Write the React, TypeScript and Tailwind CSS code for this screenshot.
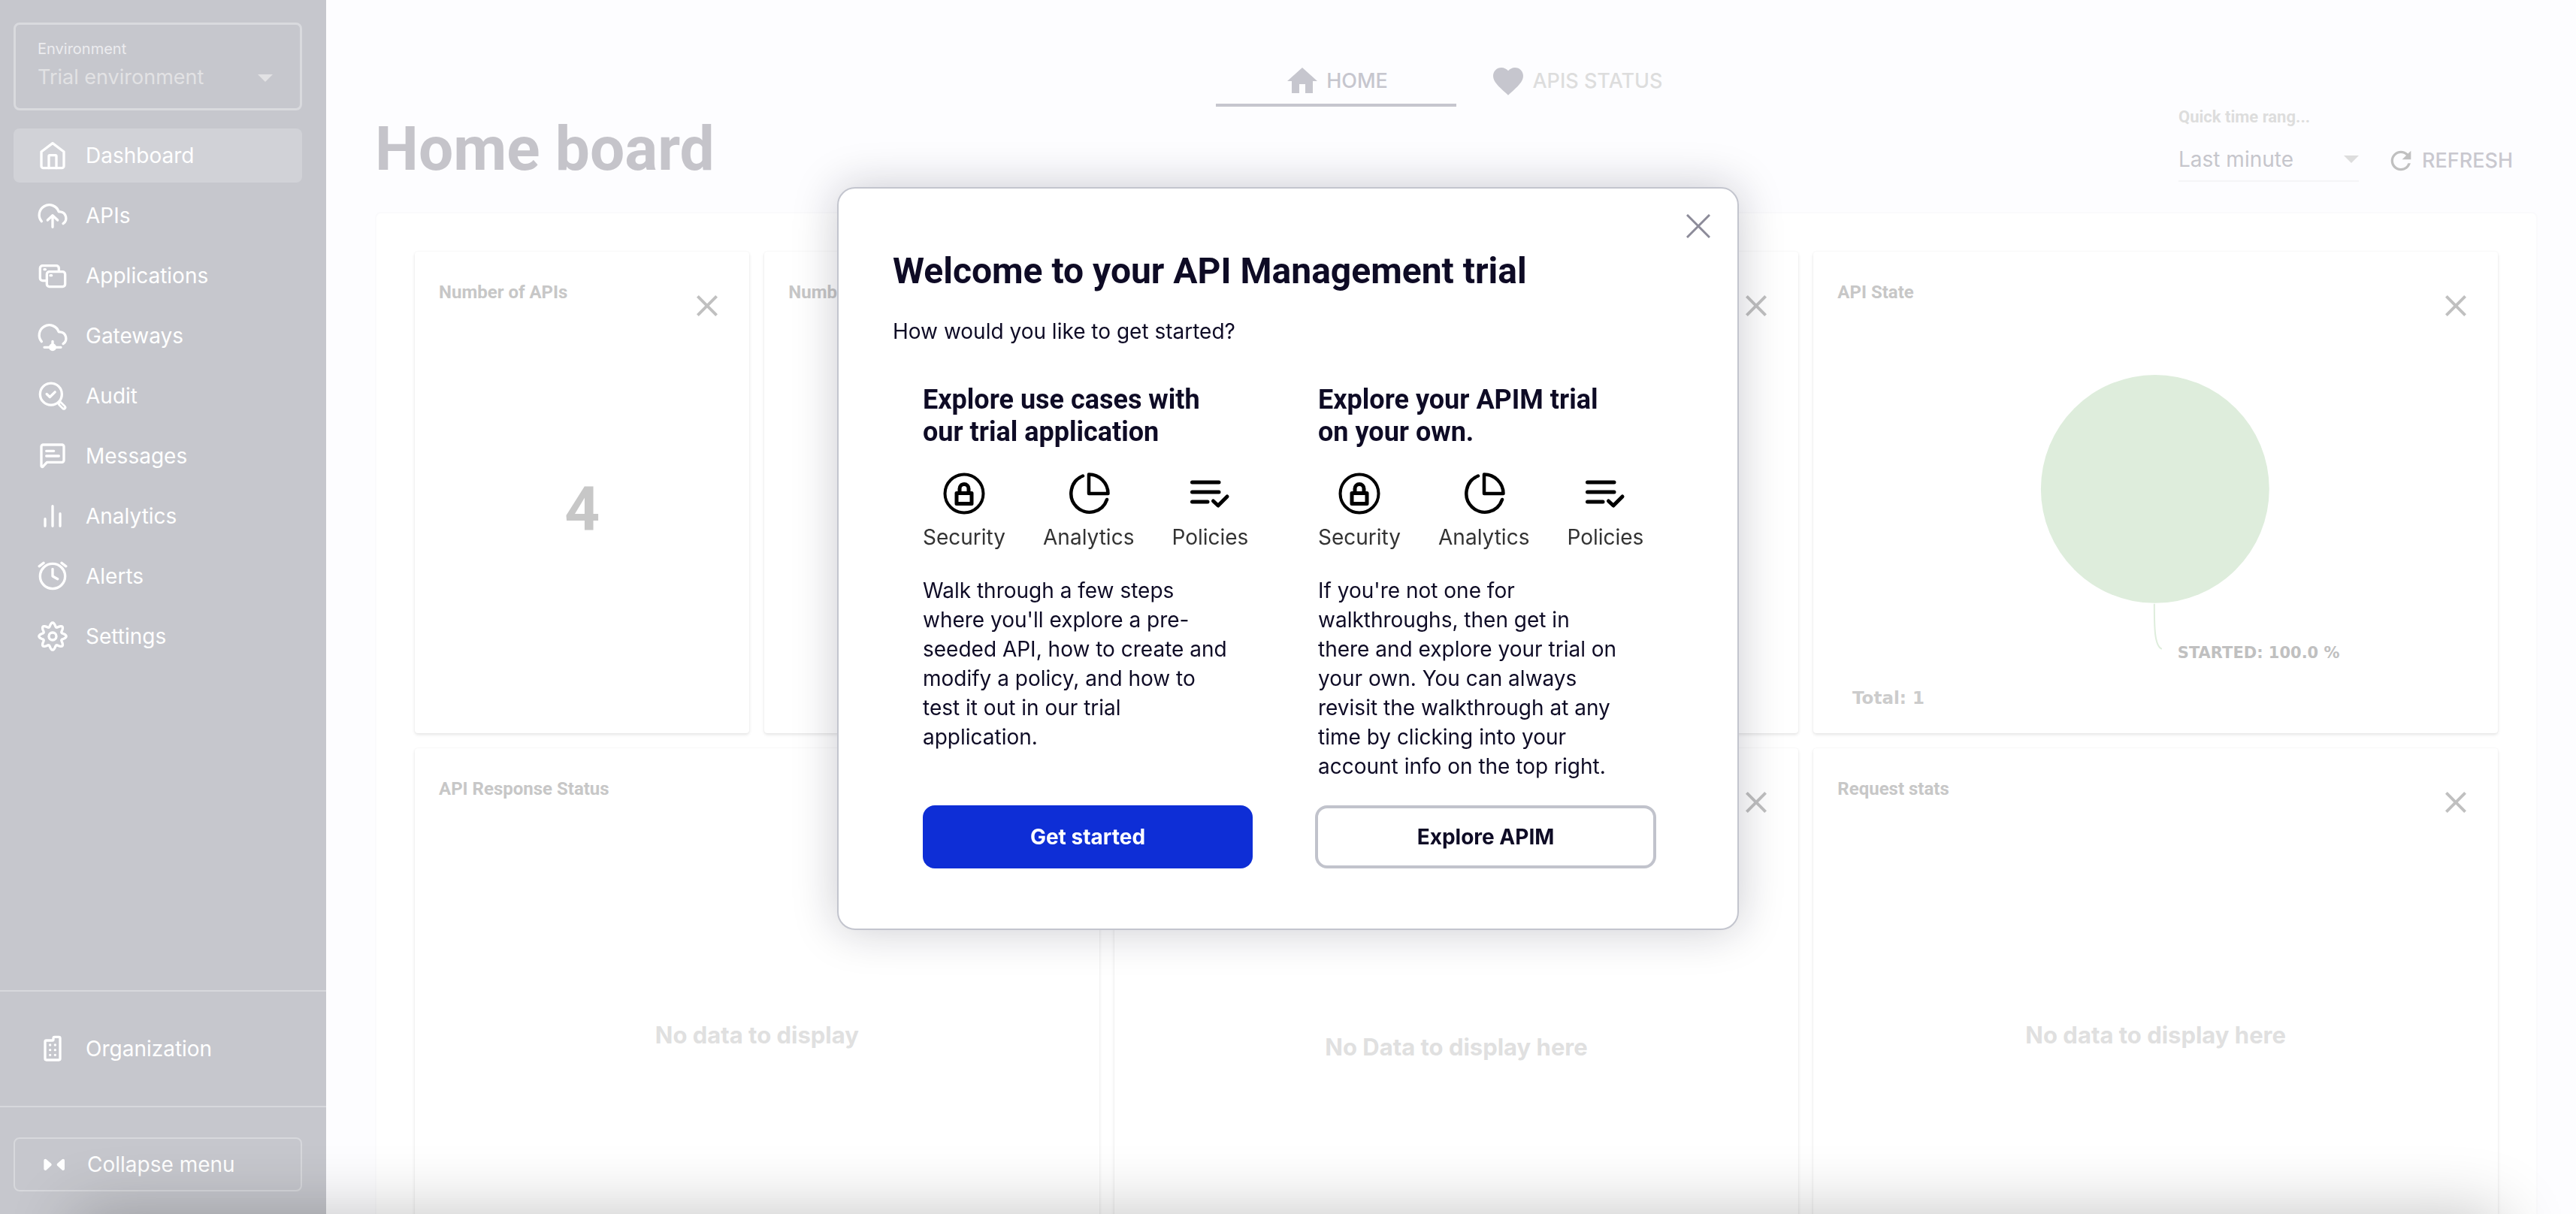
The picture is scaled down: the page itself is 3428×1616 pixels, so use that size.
import type { ReactNode } from "react";
import { MdClose, MdFavorite, MdHome, MdRefresh } from "react-icons/md";

const gearPath =
  Array.from({ length: 160 }, (_, i) => {
    const a = (i / 160) * Math.PI * 2;
    const r = 9.3 + 1.6 * Math.cos(8 * a);
    return `${i === 0 ? "M" : "L"}${(12 + r * Math.sin(a)).toFixed(2)} ${(12 - r * Math.cos(a)).toFixed(2)}`;
  }).join("") + "Z";

function NavIcon({ children }: { children: ReactNode }) {
  return (
    <svg
      viewBox="0 0 24 24"
      className="size-10 shrink-0 overflow-visible"
      fill="none"
      stroke="currentColor"
      strokeWidth="2"
      strokeLinecap="round"
      strokeLinejoin="round"
      aria-hidden="true"
    >
      {children}
    </svg>
  );
}

const cloud = "M3.2 16.6A8 8 0 1 1 16.9 8.9H18a5.2 5.2 0 0 1 2.4 9.5";

const navItems: { label: string; icon: ReactNode; active?: boolean }[] = [
  {
    label: "Dashboard",
    active: true,
    icon: (
      <>
        <path d="m3 9 9-6.8L21 9v11.4a1.6 1.6 0 0 1-1.6 1.6H4.6a1.6 1.6 0 0 1-1.6-1.6z" />
        <path d="M9 22V12.400a.6.6 0 0 1 .6-.6h4.800a.6.6 0 0 1 .6.6V22" />
      </>
    ),
  },
  {
    label: "APIs",
    icon: (
      <>
        <path d={cloud} />
        <path d="M12 21.200V11.800M8 15.600l4-3.800 4 3.800" />
      </>
    ),
  },
  {
    label: "Applications",
    icon: (
      <>
        <path d="M6.800 16H4a2 2 0 0 1-2-2V6a2 2 0 0 1 2-2h11a2 2 0 0 1 2 2v2.400" />
        <rect x="7.400" y="8.800" width="14.600" height="12" rx="2" />
        <path d="M5.400 7h.8M10.200 11.800h1" />
      </>
    ),
  },
  {
    label: "Gateways",
    icon: (
      <>
        <path d={cloud} />
        <path d="M12 16.400v4.800M5.400 21.200h13.200" />
        <circle cx="12" cy="21.200" r="2" fill="currentColor" />
      </>
    ),
  },
  {
    label: "Audit",
    icon: (
      <>
        <circle cx="10.700" cy="10.600" r="8.700" />
        <path d="m7.300 10.500 2.500 2.400 4.100-4" />
        <path d="m18 18.200 3 3" strokeWidth="4" />
        <path d="m18.200 18.400 2.600 2.600" strokeWidth="0.700" stroke="#c6c7cd" />
      </>
    ),
  },
  {
    label: "Messages",
    icon: (
      <>
        <path d="M21 15.500a1.500 1.500 0 0 1-1.500 1.500H7.500L4.500 20.200C4 20.900 3 20.900 3 20V4.500A1.500 1.500 0 0 1 4.500 3h15A1.500 1.500 0 0 1 21 4.500z" />
        <path d="M7 8h6M7 12h10" />
      </>
    ),
  },
  { label: "Analytics", icon: <path d="M6 14.200V20M12 4v16M18 10v10" /> },
  {
    label: "Alerts",
    icon: (
      <>
        <circle cx="12" cy="12" r="10" />
        <path d="M12 6.200V12l4 2.200M1.300 4.100l3.500-2.700M22.700 4.100l-3.500-2.700" />
      </>
    ),
  },
  {
    label: "Settings",
    icon: (
      <>
        <path d={gearPath} />
        <circle cx="12" cy="12" r="3" />
      </>
    ),
  },
];

function Caret({ className }: { className: string }) {
  return (
    <svg viewBox="0 0 20 10" className={className} fill="currentColor" aria-hidden="true">
      <path d="M0 0h20L10 10z" />
    </svg>
  );
}

function Sidebar() {
  return (
    <aside className="flex w-[434px] shrink-0 flex-col bg-[#c6c7cd] pt-[30px] font-[Inter,sans-serif] text-[28px] leading-9 text-white">
      <div className="relative ml-[18px] mr-8 rounded-lg border-3 border-[#d9dade] pb-[23px] pl-[29px] pr-9 pt-5">
        <label htmlFor="environment" className="block text-[20px] leading-6 text-[#ececef]">
          Environment
        </label>
        <select
          id="environment"
          className="mt-2 block h-9 w-full appearance-none bg-transparent text-[27px] leading-9 text-[#e2e2e4]"
        >
          <option>Trial environment</option>
        </select>
        <Caret className="pointer-events-none absolute right-9 top-[66px] h-2.5 w-5 text-[#e2e2e4]" />
      </div>
      <nav className="ml-[18px] mr-8 mt-6 flex flex-1 flex-col gap-2" aria-label="Main">
        {navItems.map((item) => (
          <a
            key={item.label}
            href="#"
            aria-current={item.active ? "page" : undefined}
            className={
              item.active
                ? "flex h-[72px] items-center gap-6 rounded-lg bg-[#d1d2d7] px-8"
                : "flex h-[72px] items-center gap-6 rounded-lg px-8"
            }
          >
            <NavIcon>{item.icon}</NavIcon>
            {item.label}
          </a>
        ))}
      </nav>
      <div className="border-t-2 border-[#d7d8dc] py-10 pl-[18px] pr-8">
        <a href="#" className="flex h-[72px] items-center gap-6 rounded-lg px-8">
          <NavIcon>
            <path d="M7 5.400h4.800a.8.8 0 0 0 .8-.8V3.600a1 1 0 0 1 1-1H17a1 1 0 0 1 1 1V20a1 1 0 0 1-1 1H7a1 1 0 0 1-1-1V6.400a1 1 0 0 1 1-1z" />
            <path d="M10 9h.01M14 9h.01M10 13h.01M14 13h.01M10 17h.01M14 17h.01" />
          </NavIcon>
          Organization
        </a>
      </div>
      <div className="border-t-2 border-[#d7d8dc] pb-[30px] pl-[18px] pr-8 pt-10">
        <button
          type="button"
          className="flex h-[72px] w-full items-center gap-6 rounded-lg border-2 border-[#d7d8dc] px-8"
        >
          <NavIcon>
            <path
              d="M5 8.800 8.800 12.200 5 15.600zM19.200 8.800 15.400 12.200l3.800 3.400z"
              fill="currentColor"
              strokeWidth="2.400"
            />
          </NavIcon>
          Collapse menu
        </button>
      </div>
    </aside>
  );
}

function Widget({
  title,
  span = "col-span-2",
  children,
}: {
  title?: string;
  span?: "col-span-1" | "col-span-2";
  children?: ReactNode;
}) {
  return (
    <section
      className={`${span} flex h-[641px] flex-col rounded bg-white shadow-[0_0_2px_rgba(0,0,0,0.06),0_2px_4px_rgba(0,0,0,0.1)]`}
    >
      <header className="flex h-24 items-start justify-between px-8 pt-[38px]">
        <h2 className="text-[24px] font-bold leading-8 text-[#c7c7c7]">{title}</h2>
        <button type="button" aria-label="Remove widget" className="mt-2.5 text-[#c0c0c0]">
          <MdClose className="size-12" />
        </button>
      </header>
      {children}
    </section>
  );
}

function StatePie() {
  return (
    <svg viewBox="0 0 911 545" className="w-full" role="img" aria-label="API State">
      <circle cx="455" cy="220" r="152" fill="#deeddc" />
      <path d="M454 373c0 30 0 56 10 60" fill="none" stroke="#deeddc" strokeWidth="2" />
      <g fontFamily="'DejaVu Sans', sans-serif" fontWeight="bold">
        <text x="485" y="445" fontSize="21" fill="#c0c0c0">
          STARTED: 100.0 %
        </text>
        <text x="52" y="506" fontSize="23" fill="#cccccc">
          Total: 1
        </text>
      </g>
    </svg>
  );
}

function Dashboard() {
  return (
    <main className="flex min-w-0 flex-1 flex-col bg-[#fdfdff] pl-[65px] pr-[51px] pt-[72px] font-[Roboto,sans-serif]">
      <div
        role="tablist"
        className="flex justify-center font-[Inter,sans-serif] text-[27px] font-medium leading-9"
      >
        <button
          type="button"
          role="tab"
          aria-selected="true"
          className="flex h-[70px] w-80 items-center justify-center gap-2 border-b-4 border-[#c6c6ce] pt-1.5 text-[#c6c6ce]"
        >
          <MdHome className="size-12" />
          HOME
        </button>
        <button
          type="button"
          role="tab"
          aria-selected="false"
          className="flex h-[70px] w-80 items-center justify-center gap-2 border-b-4 border-transparent pt-1.5 text-[#dddddd]"
        >
          <MdFavorite className="size-12 text-[#c6c6ce]" />
          APIS STATUS
        </button>
      </div>
      <div className="mt-0.5 flex items-end justify-between pr-[33px]">
        <h1 className="text-[82px] font-bold leading-24 text-[#c5c4ca]">Home board</h1>
        <div className="flex items-end gap-9 pb-1 font-[Inter,sans-serif]">
          <div className="relative w-60">
            <label
              htmlFor="range"
              className="block font-[Roboto,sans-serif] text-[22px] font-bold leading-6 text-[#dddddd]"
            >
              Quick time rang...
            </label>
            <select
              id="range"
              className="mt-6 block h-[50px] w-full appearance-none border-b-2 border-[#f5f5f7] bg-transparent pb-2 text-[28px] leading-10 text-[#c6c6cc]"
            >
              <option>Last minute</option>
            </select>
            <Caret className="pointer-events-none absolute bottom-[25px] right-0 h-2.5 w-5 text-[#dddddd]" />
          </div>
          <button
            type="button"
            className="mb-2 flex h-10 items-center gap-2 text-[27px] font-medium leading-10 text-[#c9c8cf]"
          >
            <MdRefresh className="size-10 text-[#c0c0c0]" />
            REFRESH
          </button>
        </div>
      </div>
      <div className="mt-9 shrink-0 rounded-lg border-2 border-[#fafafc] bg-white p-[51px]">
        <div className="grid grid-cols-6 gap-5">
          <Widget title="Number of APIs" span="col-span-1">
            <p className="flex flex-1 items-center justify-center pb-[50px] text-[82px] font-bold text-[#c7c7c7]">4</p>
          </Widget>
          <Widget title="Numb" span="col-span-1" />
          <Widget />
          <Widget title="API State">
            <StatePie />
          </Widget>
          <Widget title="API Response Status">
            <p className="flex flex-1 items-center justify-center pt-7 font-[Inter,sans-serif] text-[31px] font-bold text-[#e0e0e0]">
              No data to display
            </p>
          </Widget>
          <Widget>
            <p className="flex flex-1 items-center justify-center pt-15 font-[Inter,sans-serif] text-[31px] font-bold text-[#e0e0e0]">
              No Data to display here
            </p>
          </Widget>
          <Widget title="Request stats">
            <p className="flex flex-1 items-center justify-center pt-7 font-[Inter,sans-serif] text-[31px] font-bold text-[#e0e0e0]">
              No data to display here
            </p>
          </Widget>
        </div>
      </div>
    </main>
  );
}

const features: { label: string; icon: ReactNode }[] = [
  {
    label: "Security",
    icon: (
      <>
        <circle cx="28" cy="28" r="25.500" strokeWidth="4" />
        <rect x="18" y="27.500" width="20" height="14" strokeWidth="5" />
        <path d="M22 27v-5.500a6 6 0 0 1 12 0V27" strokeWidth="5" />
      </>
    ),
  },
  {
    label: "Analytics",
    icon: (
      <g strokeWidth="4.500">
        <path d="M28 2.500V28h25.500A25.500 25.500 0 0 0 28 2.500z" />
        <path d="M20 4.500A24.500 25 0 1 0 52 36" />
      </g>
    ),
  },
  {
    label: "Policies",
    icon: (
      <g strokeWidth="5">
        <path d="M4.500 13H40M4.500 26H40M4.500 39H25" />
        <path d="m32.500 38 6.500 6 12-12" />
      </g>
    ),
  },
];

function FeatureRow() {
  return (
    <ul className="mt-8 flex gap-[50px] text-[28px] leading-10 text-[#333333]">
      {features.map((f) => (
        <li key={f.label} className="flex flex-col items-center gap-2.5">
          <svg
            viewBox="0 0 56 56"
            className="size-14 text-black"
            fill="none"
            stroke="currentColor"
            strokeLinecap="round"
            strokeLinejoin="round"
            aria-hidden="true"
          >
            {f.icon}
          </svg>
          {f.label}
        </li>
      ))}
    </ul>
  );
}

function WelcomeDialog() {
  return (
    <div className="fixed inset-0 flex items-start justify-center pt-[249px]">
      <div
        role="dialog"
        aria-modal="true"
        aria-labelledby="welcome-title"
        className="relative w-[1200px] max-w-full rounded-3xl border-2 border-[#c3c5ce] bg-white pb-20 pt-[82px] font-[Inter,sans-serif] text-[28px] text-[#0e0b25] shadow-[0_0_60px_rgba(16,20,40,0.22)]"
      >
        <button type="button" aria-label="Close" className="absolute right-7 top-[26px] p-2 text-[#8c8b99]">
          <svg viewBox="0 0 32 32" className="size-8" fill="none" stroke="currentColor" strokeWidth="3" aria-hidden="true">
            <path d="M1 1l30 30M31 1L1 31" />
          </svg>
        </button>
        <h2 id="welcome-title" className="px-[72px] font-[Roboto,sans-serif] text-[48px] font-bold leading-14">
          Welcome to your API Management trial
        </h2>
        <p className="mt-8 px-[72px] leading-10">How would you like to get started?</p>
        <div className="mt-[50px] grid grid-cols-[439fr_454fr] gap-x-[83px] pl-28 pr-27">
          <section className="flex flex-col">
            <h3 className="font-[Roboto,sans-serif] text-[36px] font-bold leading-[43px]">
              Explore use cases with
              <br />
              our trial application
            </h3>
            <FeatureRow />
            <p className="mb-8 mt-8 max-w-[410px] leading-[39px]">
              Walk through a few steps where you'll explore a pre-seeded API, how to create and modify a policy, and how
              to test it out in our trial application.
            </p>
            <button
              type="button"
              className="mt-auto h-21 w-full rounded-2xl bg-[#0e2ed6] font-bold text-white"
            >
              Get started
            </button>
          </section>
          <section className="flex flex-col">
            <div className="pl-1">
              <h3 className="font-[Roboto,sans-serif] text-[36px] font-bold leading-[43px]">
                Explore your APIM trial
                <br />
                on your own.
              </h3>
              <FeatureRow />
              <p className="mb-8 mt-8 max-w-[410px] leading-[39px]">
                If you're not one for walkthroughs, then get in there and explore your trial on your own. You can always
                revisit the walkthrough at any time by clicking into your account info on the top right.
              </p>
            </div>
            <button
              type="button"
              className="mt-auto h-21 w-full rounded-2xl border-4 border-[#c1c3cc] bg-white font-bold"
            >
              Explore APIM
            </button>
          </section>
        </div>
      </div>
    </div>
  );
}

export default function App() {
  return (
    <div className="relative flex h-screen overflow-hidden">
      <Sidebar />
      <Dashboard />
      <div className="pointer-events-none absolute inset-x-[100px] top-full h-60 shadow-[0_0_90px_rgba(0,0,0,0.24)]" />
      <WelcomeDialog />
    </div>
  );
}
